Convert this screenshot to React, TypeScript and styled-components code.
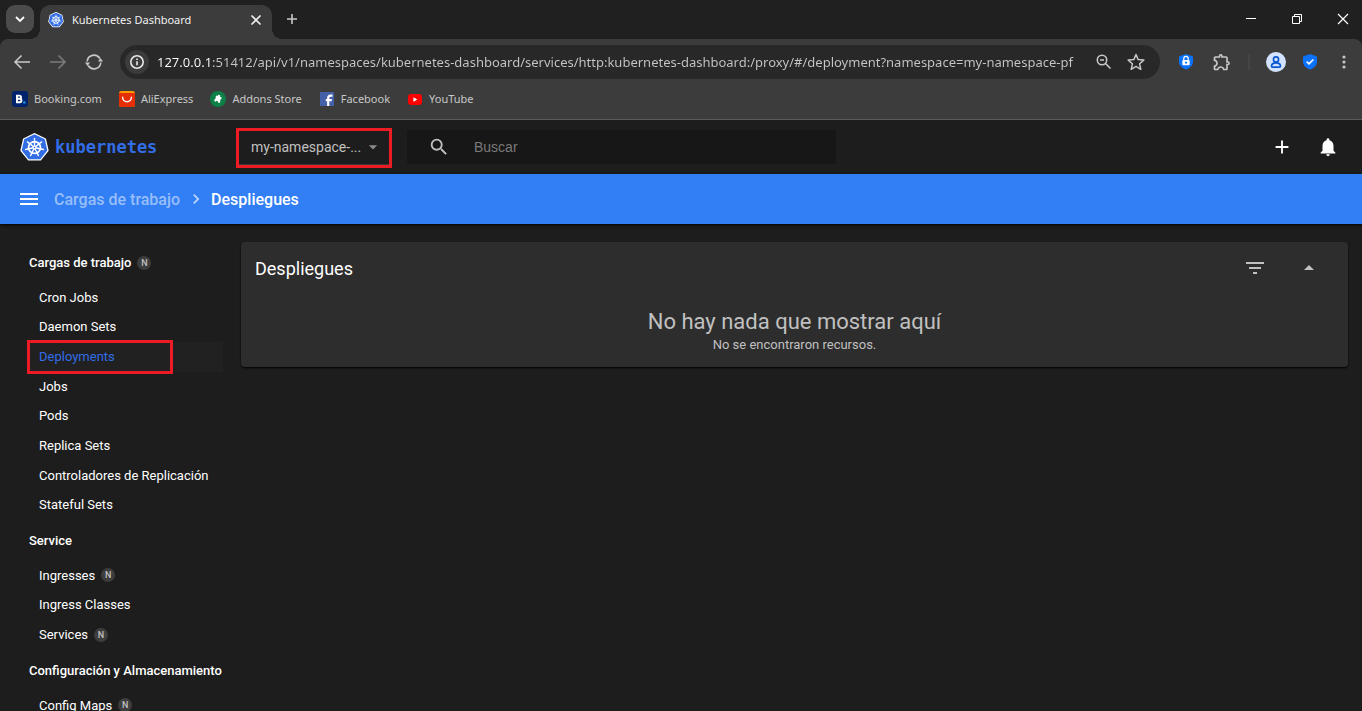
import React from 'react';
import styled, { createGlobalStyle } from 'styled-components';
import {
  MdAdd,
  MdArrowDropDown,
  MdArrowDropUp,
  MdChevronRight,
  MdFilterList,
  MdMenu,
  MdNotifications,
  MdOutlineExtension,
  MdSearch,
} from 'react-icons/md';

const c = {
  strip: '#202020',
  chrome: '#3c3c3c',
  pill: '#282828',
  chromeText: '#c7c7c7',
  page: '#1d1d1d',
  field: '#171717',
  card: '#2d2d2d',
  primary: '#327ef5',
  link: '#326de6',
  mark: '#ed1c24',
};

const GlobalStyle = createGlobalStyle`
  * { box-sizing: border-box; }
  body { margin: 0; background: ${c.page}; color: #fff; font-family: Roboto, sans-serif; }
  button, input, select { font: inherit; color: inherit; border: 0; padding: 0; margin: 0; background: none; outline: 0; }
  a { color: inherit; text-decoration: none; }
  ul { list-style: none; margin: 0; padding: 0; }
  h1, h2, p { margin: 0; }
  svg { display: block; flex: none; }
`;

const Screen = styled.div`
  display: flex;
  flex-direction: column;
  height: 100vh;
`;

/* ---------- Browser window ---------- */

const BrowserChrome = styled.header`
  flex: none;
  background: ${c.strip};
  font-family: 'Noto Sans', sans-serif;
  font-size: 11px;
`;

const TabStrip = styled.div`
  display: flex;
  height: 39px;
  padding-left: 6px;
`;

const TabSearch = styled.button`
  display: grid;
  place-items: center;
  width: 28px;
  height: 28px;
  margin: 5px 6px 0 0;
  border-radius: 9px;
  background: #4b4b4b;
`;

const Tab = styled.div`
  position: relative;
  display: flex;
  align-items: center;
  gap: 8px;
  width: 232px;
  height: 34px;
  margin-top: 5px;
  padding: 0 9px 4px 8px;
  border-radius: 10px 10px 0 0;
  background: ${c.chrome};
  color: #f1f1f1;

  &::before,
  &::after {
    content: '';
    position: absolute;
    bottom: 0;
    width: 10px;
    height: 10px;
  }
  &::before {
    right: 100%;
    background: radial-gradient(circle at 0 0, transparent 10px, ${c.chrome} 10px);
  }
  &::after {
    left: 100%;
    background: radial-gradient(circle at 100% 0, transparent 10px, ${c.chrome} 10px);
  }
`;

const TabTitle = styled.span`
  flex: 1;
  padding-bottom: 2px;
  white-space: nowrap;
`;

const StripButton = styled.button<{ $w: number }>`
  display: grid;
  place-items: center;
  width: ${(p) => p.$w}px;
  height: 38px;
  color: #fff;
`;

const WindowControls = styled.div`
  display: flex;
  margin-left: auto;
  margin-right: -4px;
`;

const Toolbar = styled.div`
  display: flex;
  align-items: center;
  height: 46px;
  padding-left: 4px;
  border-radius: 8px 8px 0 0;
  background: ${c.chrome};
  color: ${c.chromeText};
`;

const ToolButton = styled.button<{ $w?: number; $dim?: boolean }>`
  display: grid;
  place-items: center;
  flex: none;
  width: ${(p) => p.$w ?? 36}px;
  height: 34px;
  opacity: ${(p) => (p.$dim ? 0.45 : 1)};
`;

const AddressBar = styled.form`
  display: flex;
  align-items: center;
  flex: 1;
  min-width: 0;
  height: 34px;
  margin: 0 8px;
  padding: 0 8px 0 5px;
  border-radius: 17px;
  background: ${c.pill};
`;

const SiteInfo = styled.button`
  display: grid;
  place-items: center;
  flex: none;
  width: 24px;
  height: 24px;
  margin-right: 8px;
  border-radius: 50%;
  background: ${c.chrome};
  color: #e8e8e8;
`;

const AddressInput = styled.input`
  flex: 1;
  min-width: 0;
  height: 24px;
  font-size: 13px;
  background: linear-gradient(90deg, #fff 56px, ${c.chromeText} 56px);
  background-clip: text;
  -webkit-text-fill-color: transparent;
`;

const ToolDivider = styled.span`
  width: 2px;
  height: 16px;
  margin: 0 8px;
  border-radius: 1px;
  background: #454545;
`;

const BookmarkBar = styled.nav`
  display: flex;
  gap: 17px;
  height: 35px;
  padding: 0 12px 7px;
  border-bottom: 1px solid #5a5a5a;
  background: ${c.chrome};
  color: ${c.chromeText};
`;

const Bookmark = styled.a`
  display: flex;
  align-items: center;
  gap: 6px;
  white-space: nowrap;
`;

/* ---------- Dashboard ---------- */

const AppHeader = styled.header`
  display: flex;
  align-items: center;
  flex: none;
  height: 54px;
  padding: 0 11px 0 20px;
`;

const Brand = styled.a`
  display: flex;
  align-items: center;
  gap: 6px;
  flex: none;
  width: 216px;
  color: ${c.link};
  font: 700 17px 'DejaVu Sans Mono', monospace;
`;

const NamespaceField = styled.label`
  position: relative;
  flex: none;
  width: 156px;
  height: 40px;
  margin: 2px 15px 0 0;
  border: 3px solid ${c.mark};
  color: #c0c0c0;

  svg {
    position: absolute;
    right: 6px;
    top: 6px;
    color: #8c8c8c;
    pointer-events: none;
  }
`;

const NamespaceSelect = styled.select`
  appearance: none;
  width: 100%;
  height: 34px;
  padding: 0 20px 2px 12px;
  border-bottom: 1px solid #3a3a3a;
  font-size: 14px;
`;

const SearchBox = styled.label`
  display: flex;
  align-items: center;
  gap: 24px;
  flex: 0 1 429px;
  height: 34px;
  padding-left: 21px;
  border-radius: 2px;
  background: ${c.field};
  color: #c0c0c0;
`;

const SearchInput = styled.input`
  flex: 1;
  min-width: 0;
  font: 14px 'Liberation Sans', sans-serif;

  &::placeholder {
    color: #7a7a7a;
  }
`;

const HeaderActions = styled.div`
  display: flex;
  margin-left: auto;
`;

const IconButton = styled.button<{ $w: number }>`
  display: grid;
  place-items: center;
  width: ${(p) => p.$w}px;
  height: 36px;
`;

const Crumbs = styled.nav`
  position: relative;
  display: flex;
  align-items: center;
  flex: none;
  height: 50px;
  padding-left: 17px;
  background: ${c.primary};
  box-shadow: 0 1px 3px #000;
  font-size: 16px;
  font-weight: 500;
`;

const MenuButton = styled.button`
  margin-right: 13px;
`;

const CrumbLink = styled.a`
  color: #98befa;
`;

const CrumbArrow = styled(MdChevronRight)`
  margin: 0 5px 0 6px;
  color: #c1d8fc;
`;

const Content = styled.div`
  display: grid;
  grid-template-columns: 241px 1fr;
  flex: 1;
  min-height: 0;
`;

const Sidebar = styled.nav`
  min-height: 0;
  overflow-y: auto;
  scrollbar-width: none;
  padding: 18px 18px 0 27px;
  font-size: 13px;
`;

const SectionHeading = styled.h2`
  display: flex;
  align-items: center;
  gap: 6px;
  height: 41px;
  padding-left: 2px;
  font-size: 13px;
  font-weight: 500;
  white-space: nowrap;
`;

const SectionList = styled.ul`
  display: grid;
  grid-auto-rows: 29px 30px 30px;
`;

const Entry = styled.li<{ $active?: boolean }>`
  position: relative;
  background: ${(p) => (p.$active ? '#212121' : 'none')};
  color: ${(p) => (p.$active ? c.link : 'inherit')};

  &::after {
    content: '';
    display: ${(p) => (p.$active ? 'block' : 'none')};
    position: absolute;
    inset: -2px 50px -2px 0;
    border: 3px solid ${c.mark};
  }
`;

const EntryLink = styled.a`
  display: flex;
  align-items: center;
  gap: 6px;
  height: 100%;
  padding: 0 0 1px 12px;
`;

const Badge = styled.span`
  display: grid;
  place-items: center;
  width: 14px;
  height: 14px;
  border-radius: 50%;
  background: #3d3d3d;
  color: #c0c0c0;
  font-size: 9px;
  font-weight: 500;
  line-height: 14px;
`;

const Main = styled.main`
  min-width: 0;
  padding: 18px 14px 18px 0;
`;

const Card = styled.section`
  border-radius: 4px;
  background: ${c.card};
  box-shadow: 0 1px 2px #000;
`;

const CardHeader = styled.div`
  display: flex;
  align-items: center;
  height: 52px;
  padding: 0 12px 0 14px;
  color: #c0c0c0;
`;

const CardTitle = styled.h1`
  flex: 1;
  color: #fff;
  font-size: 18px;
  font-weight: 400;
`;

const EmptyState = styled.div`
  padding: 14px 0 13px;
  color: #c0c0c0;
  text-align: center;
`;

const EmptyTitle = styled.p`
  font-size: 22px;
  line-height: 28px;
`;

const EmptyText = styled.p`
  font-size: 13px;
  line-height: 18px;
`;

/* ---------- Drawings ---------- */

const ring = (n: number, r: number, offset = 0) =>
  Array.from({ length: n }, (_, i) => {
    const a = (Math.PI * 2 * i) / n - Math.PI / 2 + offset;
    return [16 + r * Math.cos(a), 16 + r * Math.sin(a)];
  });
const points = (r: number) => ring(7, r).map((p) => p.join(',')).join(' ');

const KubernetesLogo = ({ size }: { size: number }) => (
  <svg width={size} height={size} viewBox="0 0 32 32" aria-hidden="true">
    <polygon points={points(14.4)} fill="#fff" stroke="#fff" strokeWidth="3" strokeLinejoin="round" />
    <polygon points={points(13.2)} fill={c.link} stroke={c.link} strokeWidth="2.4" strokeLinejoin="round" />
    <g stroke="#fff" fill="none" strokeLinecap="round">
      <circle cx="16" cy="16" r="6.6" strokeWidth="1.9" />
      {ring(7, 10).map(([x, y]) => (
        <line key={x} x1="16" y1="16" x2={x} y2={y} strokeWidth="1.5" />
      ))}
    </g>
    <circle cx="16" cy="16" r="2.2" fill="#fff" />
    <circle cx="16" cy="16" r="0.9" fill={c.link} />
  </svg>
);

type StrokeProps = { size: number; width?: number; children: React.ReactNode };
const Stroke = ({ size, width = 1.6, children }: StrokeProps) => (
  <svg
    width={size}
    height={size}
    viewBox={`0 0 ${size} ${size}`}
    fill="none"
    stroke="currentColor"
    strokeWidth={width}
    aria-hidden="true"
  >
    {children}
  </svg>
);

const BookingIcon = () => (
  <svg width="16" height="16" viewBox="0 0 16 16" aria-hidden="true">
    <rect width="16" height="16" rx="3" fill="#00246b" />
    <path d="M5 4.6h2.4a1.5 1.5 0 0 1 0 3.2H5zM5 7.8h2.7a1.7 1.7 0 0 1 0 3.5H5z" fill="none" stroke="#fff" strokeWidth="1.9" />
    <circle cx="12.3" cy="11.4" r="1.2" fill="#1ba0f2" />
  </svg>
);

const AliIcon = () => (
  <svg width="16" height="16" viewBox="0 0 16 16" aria-hidden="true">
    <rect width="16" height="16" rx="2.5" fill="#ff9a00" />
    <path d="M0 2h16v11.5a2.5 2.5 0 0 1-2.5 2.5h-11A2.5 2.5 0 0 1 0 13.5z" fill="#e62e04" />
    <path d="M3.6 6.3a4.4 4.4 0 0 0 8.8 0" fill="none" stroke="#fff" strokeWidth="1.4" strokeLinecap="round" />
  </svg>
);

const AddonsIcon = () => (
  <svg width="16" height="16" viewBox="0 0 16 16" aria-hidden="true">
    <circle cx="8" cy="8" r="8" fill="#0d8047" />
    <path
      d="M4.500 5h2.200a1.400 1.400 0 1 1 2.600 0h2.200v2.200a1.400 1.400 0 0 0 0 2.400V12H9.300a1.300 1.300 0 0 0-2.600 0H4.500V9.600a1.400 1.400 0 0 0 0-2.400z"
      fill="#fff"
      transform="rotate(20 8 8) translate(1.2 1) scale(.85)"
    />
  </svg>
);

const FacebookIcon = () => (
  <svg width="16" height="16" viewBox="0 0 16 16" aria-hidden="true">
    <rect x="1" y="1" width="14" height="14" fill="#4460a8" />
    <path d="M9.200 15V7.200q0-2.600 2.400-2.600h1.900M6.800 9.200h6" fill="none" stroke="#fff" strokeWidth="2.200" />
  </svg>
);

const YouTubeIcon = () => (
  <svg width="16" height="16" viewBox="0 0 16 16" aria-hidden="true">
    <rect x="1" y="3" width="14" height="11" rx="3" fill="#f00" />
    <path d="M6.400 6.200v4.600l4-2.300z" fill="#fff" />
  </svg>
);

const Shield = ({ children }: { children: React.ReactNode }) => (
  <svg width="16" height="18" viewBox="0 0 16 18" aria-hidden="true">
    <path d="M8 1l7 2.400v5.400c0 3.600-3 6.200-7 7.800-4-1.600-7-4.200-7-7.800V3.400z" fill="#0a72fb" />
    {children}
  </svg>
);

/* ---------- Data ---------- */

const bookmarks = [
  { label: 'Booking.com', Icon: BookingIcon },
  { label: 'AliExpress', Icon: AliIcon },
  { label: 'Addons Store', Icon: AddonsIcon },
  { label: 'Facebook', Icon: FacebookIcon },
  { label: 'YouTube', Icon: YouTubeIcon },
];

type Item = { label: string; badge?: boolean; active?: boolean };
const sections: { title: string; badge?: boolean; items: Item[] }[] = [
  {
    title: 'Cargas de trabajo',
    badge: true,
    items: [
      { label: 'Cron Jobs' },
      { label: 'Daemon Sets' },
      { label: 'Deployments', active: true },
      { label: 'Jobs' },
      { label: 'Pods' },
      { label: 'Replica Sets' },
      { label: 'Controladores de Replicación' },
      { label: 'Stateful Sets' },
    ],
  },
  {
    title: 'Service',
    items: [{ label: 'Ingresses', badge: true }, { label: 'Ingress Classes' }, { label: 'Services', badge: true }],
  },
  { title: 'Configuración y Almacenamiento', items: [{ label: 'Config Maps', badge: true }] },
];

const url =
  '127.0.0.1:51412/api/v1/namespaces/kubernetes-dashboard/services/http:kubernetes-dashboard:/proxy/#/deployment?namespace=my-namespace-pf';

const Browser = () => (
  <BrowserChrome>
    <TabStrip>
      <TabSearch aria-label="Buscar pestañas">
        <Stroke size={12} width={1.8}><path d="M2 4l4 4 4-4" /></Stroke>
      </TabSearch>
      <Tab>
        <KubernetesLogo size={16} />
        <TabTitle>Kubernetes Dashboard</TabTitle>
        <button aria-label="Cerrar pestaña">
          <Stroke size={14}><path d="M2.500 2.500l9 9M11.500 2.500l-9 9" /></Stroke>
        </button>
      </Tab>
      <StripButton $w={40} aria-label="Nueva pestaña">
        <Stroke size={12}><path d="M6 1v10M1 6h10" stroke="#c7c7c7" /></Stroke>
      </StripButton>
      <WindowControls>
        <StripButton $w={46} aria-label="Minimizar">
          <Stroke size={12} width={1}><path d="M1 5.500h10" /></Stroke>
        </StripButton>
        <StripButton $w={46} aria-label="Restaurar">
          <Stroke size={12} width={1}><path d="M1.500 3.500h7v7h-7zM3.500 3.500v-2h7v7h-2" /></Stroke>
        </StripButton>
        <StripButton $w={46} aria-label="Cerrar">
          <Stroke size={12} width={1.2}><path d="M1 1l10 10M11 1L1 11" /></Stroke>
        </StripButton>
      </WindowControls>
    </TabStrip>
    <Toolbar>
      <ToolButton aria-label="Atrás">
        <Stroke size={18}><path d="M17 9H2M8.500 2.500L2 9l6.500 6.500" /></Stroke>
      </ToolButton>
      <ToolButton $dim aria-label="Adelante">
        <Stroke size={18}><path d="M1 9h15M9.500 2.500L16 9l-6.500 6.500" /></Stroke>
      </ToolButton>
      <ToolButton aria-label="Recargar">
        <Stroke size={18}>
          <path d="M2.200 8.500A6.800 6.800 0 0 1 14.800 5.500M15.800 9.500A6.800 6.800 0 0 1 3.200 12.500" />
          <path d="M13 8.500h5l-2.500-3.500zM0 9.500h5l-2.500 3.500z" fill="currentColor" stroke="none" transform="rotate(0 9 9)" />
        </Stroke>
      </ToolButton>
      <AddressBar>
        <SiteInfo type="button" aria-label="Información del sitio">
          <Stroke size={16}>
            <circle cx="8" cy="8" r="6.200" />
            <path d="M8 7.300v4M8 4.500v1.500" />
          </Stroke>
        </SiteInfo>
        <AddressInput aria-label="Dirección" defaultValue={url} />
        <ToolButton type="button" $w={32} aria-label="Zoom">
          <Stroke size={16}>
            <circle cx="6" cy="6" r="4.700" />
            <path d="M9.500 9.500l5 5M4 6h4" />
          </Stroke>
        </ToolButton>
        <ToolButton type="button" $w={32} aria-label="Añadir a marcadores">
          <Stroke size={18} width={1.5}>
            <path d="M9 1.500l2.200 5.100 5.600.5-4.200 3.700 1.200 5.500L9 13.400l-4.800 2.900 1.200-5.500L1.200 7.100l5.600-.5z" strokeLinejoin="round" />
          </Stroke>
        </ToolButton>
      </AddressBar>
      <ToolButton aria-label="VPN">
        <Shield>
          <rect x="4.300" y="7" width="7.400" height="5.300" rx="1" fill="#fff" />
          <path d="M5.800 7V5.600a2.200 2.200 0 0 1 4.400 0V7" fill="none" stroke="#fff" strokeWidth="1.200" />
          <path d="M7 9.700h2" stroke="#0a72fb" strokeWidth="1.800" />
        </Shield>
      </ToolButton>
      <ToolButton aria-label="Extensiones">
        <MdOutlineExtension size={20} />
      </ToolButton>
      <ToolDivider />
      <ToolButton aria-label="Perfil">
        <svg width="20" height="20" viewBox="0 0 20 20" aria-hidden="true">
          <circle cx="10" cy="10" r="10" fill="#d3e3fd" />
          <g fill="none" stroke="#0b57d0" strokeWidth="1.600">
            <circle cx="10" cy="7.500" r="2.600" />
            <path d="M5.500 14.200c0-4.400 9-4.400 9 0 0 .6-.4.900-.9.900H6.400c-.5 0-.9-.3-.9-.9z" />
          </g>
        </svg>
      </ToolButton>
      <ToolButton $w={32} aria-label="Protección">
        <Shield><path d="M4.700 8.600l2.300 2.300 4.400-4.400" fill="none" stroke="#fff" strokeWidth="1.600" /></Shield>
      </ToolButton>
      <ToolButton $w={36} aria-label="Menú del navegador">
        <svg width="4" height="14" viewBox="0 0 4 14" fill="currentColor" aria-hidden="true">
          <circle cx="2" cy="2" r="1.600" />
          <circle cx="2" cy="7" r="1.600" />
          <circle cx="2" cy="12" r="1.600" />
        </svg>
      </ToolButton>
    </Toolbar>
    <BookmarkBar>
      {bookmarks.map(({ label, Icon }) => (
        <Bookmark href="#" key={label}>
          <Icon />
          {label}
        </Bookmark>
      ))}
    </BookmarkBar>
  </BrowserChrome>
);

export default function App() {
  return (
    <Screen>
      <GlobalStyle />
      <Browser />
      <AppHeader>
        <Brand href="#">
          <KubernetesLogo size={29} />
          kubernetes
        </Brand>
        <NamespaceField>
          <NamespaceSelect aria-label="Espacio de nombres">
            <option>my-namespace-...</option>
          </NamespaceSelect>
          <MdArrowDropDown size={20} />
        </NamespaceField>
        <SearchBox>
          <MdSearch size={22} />
          <SearchInput placeholder="Buscar" />
        </SearchBox>
        <HeaderActions>
          <IconButton $w={46} aria-label="Crear">
            <MdAdd size={22} />
          </IconButton>
          <IconButton $w={46} aria-label="Notificaciones">
            <MdNotifications size={22} />
          </IconButton>
        </HeaderActions>
      </AppHeader>
      <Crumbs>
        <MenuButton aria-label="Menú">
          <MdMenu size={24} />
        </MenuButton>
        <CrumbLink href="#">Cargas de trabajo</CrumbLink>
        <CrumbArrow size={20} />
        <span>Despliegues</span>
      </Crumbs>
      <Content>
        <Sidebar>
          {sections.map((s) => (
            <section key={s.title}>
              <SectionHeading>
                {s.title}
                {s.badge && <Badge>N</Badge>}
              </SectionHeading>
              <SectionList>
                {s.items.map((i) => (
                  <Entry key={i.label} $active={i.active}>
                    <EntryLink href="#">
                      {i.label}
                      {i.badge && <Badge>N</Badge>}
                    </EntryLink>
                  </Entry>
                ))}
              </SectionList>
            </section>
          ))}
        </Sidebar>
        <Main>
          <Card>
            <CardHeader>
              <CardTitle>Despliegues</CardTitle>
              <IconButton $w={54} aria-label="Filtrar">
                <MdFilterList size={24} />
              </IconButton>
              <IconButton $w={54} aria-label="Contraer">
                <MdArrowDropUp size={24} />
              </IconButton>
            </CardHeader>
            <EmptyState>
              <EmptyTitle>No hay nada que mostrar aquí</EmptyTitle>
              <EmptyText>No se encontraron recursos.</EmptyText>
            </EmptyState>
          </Card>
        </Main>
      </Content>
    </Screen>
  );
}
